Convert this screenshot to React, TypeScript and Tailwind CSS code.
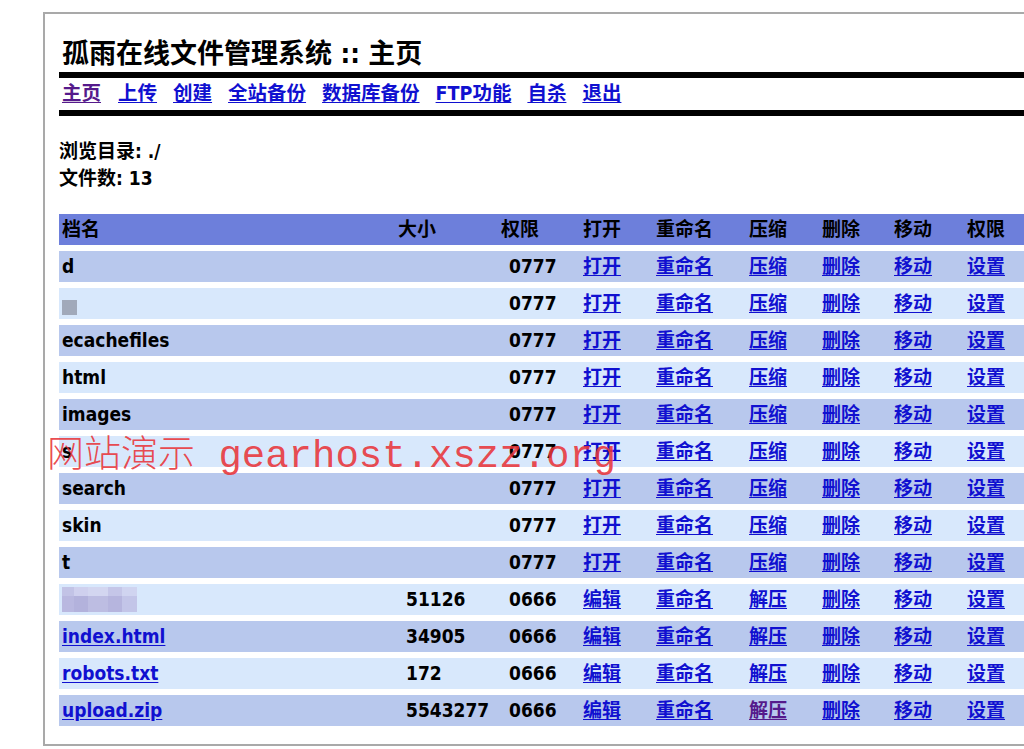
import React from "react";

type Row = {
  name: string;
  kind: "dir" | "file" | "blurA" | "blurB";
  size?: string;
  perm: string;
};

const rows: Row[] = [
  { name: "d", kind: "dir", perm: "0777" },
  { name: "", kind: "blurA", perm: "0777" },
  { name: "ecachefiles", kind: "dir", perm: "0777" },
  { name: "html", kind: "dir", perm: "0777" },
  { name: "images", kind: "dir", perm: "0777" },
  { name: "s", kind: "dir", perm: "0777" },
  { name: "search", kind: "dir", perm: "0777" },
  { name: "skin", kind: "dir", perm: "0777" },
  { name: "t", kind: "dir", perm: "0777" },
  { name: "", kind: "blurB", size: "51126", perm: "0666" },
  { name: "index.html", kind: "file", size: "34905", perm: "0666" },
  { name: "robots.txt", kind: "file", size: "172", perm: "0666" },
  { name: "upload.zip", kind: "file", size: "5543277", perm: "0666" },
];

const navItems = ["主页", "上传", "创建", "全站备份", "数据库备份", "FTP功能", "自杀", "退出"];

const link = "text-[#1010d0] underline underline-offset-2";
const visited = "text-[#551a8b] underline underline-offset-2";
const cell = "h-[31px] p-0 pl-[3px] leading-[31px] whitespace-nowrap";

function Name({ row }: { row: Row }) {
  if (row.kind === "dir") return <span className="text-black">{row.name}</span>;
  if (row.kind === "file")
    return (
      <a href="#" className={link}>
        {row.name}
      </a>
    );
  if (row.kind === "blurA")
    return (
      <span className="inline-flex h-[31px] items-center align-top">
        <span className="mt-[8px] block h-[15px] w-[15px] bg-[#a1a9ba]" />
      </span>
    );
  // mosaic placeholder
  return (
    <span className="inline-flex h-[31px] flex-col justify-center align-top">
      <span className="flex">
        <span className="block h-[9px] w-[12px] bg-[#c2c3e6]" />
        <span className="block h-[9px] w-[14px] bg-[#cfd0ee]" />
        <span className="block h-[9px] w-[20px] bg-[#d3d6f0]" />
        <span className="block h-[9px] w-[14px] bg-[#c5c6e8]" />
        <span className="block h-[9px] w-[15px] bg-[#d0d4f0]" />
      </span>
      <span className="flex">
        <span className="block h-[16px] w-[12px] bg-[#b9b8e0]" />
        <span className="block h-[16px] w-[14px] bg-[#b3b2dc]" />
        <span className="block h-[16px] w-[20px] bg-[#bdbde2]" />
        <span className="block h-[16px] w-[14px] bg-[#b6b5de]" />
        <span className="block h-[16px] w-[15px] bg-[#c3c5e8]" />
      </span>
    </span>
  );
}

export default function App() {
  return (
    <div className="relative h-[749px] w-[1024px] overflow-hidden bg-white font-['DejaVu_Sans_Condensed','DejaVu_Sans','Noto_Sans_CJK_SC',sans-serif] font-bold text-black">
      <div className="ml-[43px] mt-[12px] w-[1120px] border-2 border-[#a9a9a9] pb-[12px] pl-[14px] pt-[24px]">
        {/* Title */}
        <h1 className="pl-[3px] text-[27px] leading-[32px]">孤雨在线文件管理系统 :: 主页</h1>
        <div className="mt-[2px] h-[6px] bg-black" />
        <nav className="flex gap-4 py-[2px] pl-[3px] text-[19.5px] leading-[28px]">
          {navItems.map((item, i) => (
            <a key={item} href="#" className={i === 0 ? visited + " mr-[1px]" : link}>
              {item}
            </a>
          ))}
        </nav>
        <div className="h-[6px] bg-black" />

        {/* Info */}
        <div className="mt-[22px] text-[19px] leading-[27px]">
          <div>浏览目录: ./</div>
          <div>文件数: 13</div>
        </div>

        {/* File table */}
        <table className="mt-[16px] w-[985px] table-fixed border-separate [border-spacing:0_6px] text-left text-[19px]">
          <colgroup>
            <col className="w-[336px]" />
            <col className="w-[103px]" />
            <col className="w-[82px]" />
            <col className="w-[73px]" />
            <col className="w-[93px]" />
            <col className="w-[73px]" />
            <col className="w-[72px]" />
            <col className="w-[73px]" />
            <col className="w-[80px]" />
          </colgroup>
          <thead>
            <tr className="bg-[#6d7fdb]">
              {["档名", "大小", "权限", "打开", "重命名", "压缩", "删除", "移动", "权限"].map((h, i) => (
                <th key={i} className={cell + " font-bold"}>
                  {h}
                </th>
              ))}
            </tr>
          </thead>
          <tbody>
            {rows.map((row, i) => {
              const isDir = row.kind === "dir" || row.kind === "blurA";
              const last = i === rows.length - 1;
              return (
                <tr key={i} className={i % 2 === 0 ? "bg-[#b8c8ed]" : "bg-[#d8e8fc]"}>
                  <td className={cell}>
                    <Name row={row} />
                  </td>
                  <td className={cell + " pl-[11px]"}>{row.size ?? ""}</td>
                  <td className={cell + " pl-[11px]"}>{row.perm}</td>
                  <td className={cell}>
                    <a href="#" className={link}>
                      {isDir ? "打开" : "编辑"}
                    </a>
                  </td>
                  <td className={cell}>
                    <a href="#" className={link}>
                      重命名
                    </a>
                  </td>
                  <td className={cell}>
                    <a href="#" className={last ? visited : link}>
                      {isDir ? "压缩" : "解压"}
                    </a>
                  </td>
                  <td className={cell}>
                    <a href="#" className={link}>
                      删除
                    </a>
                  </td>
                  <td className={cell}>
                    <a href="#" className={link}>
                      移动
                    </a>
                  </td>
                  <td className={cell}>
                    <a href="#" className={link}>
                      设置
                    </a>
                  </td>
                </tr>
              );
            })}
          </tbody>
        </table>
      </div>

      {/* Watermark overlay */}
      <div className="pointer-events-none absolute left-[47px] top-[433px] flex items-baseline whitespace-pre font-normal leading-none text-[#e8353a]/90">
        <span className="font-['Noto_Sans_CJK_SC',sans-serif] text-[37px] font-light">网站演示</span>
        <span className="font-['Liberation_Mono',monospace] text-[39px]"> gearhost.xszz.org</span>
      </div>
    </div>
  );
}
